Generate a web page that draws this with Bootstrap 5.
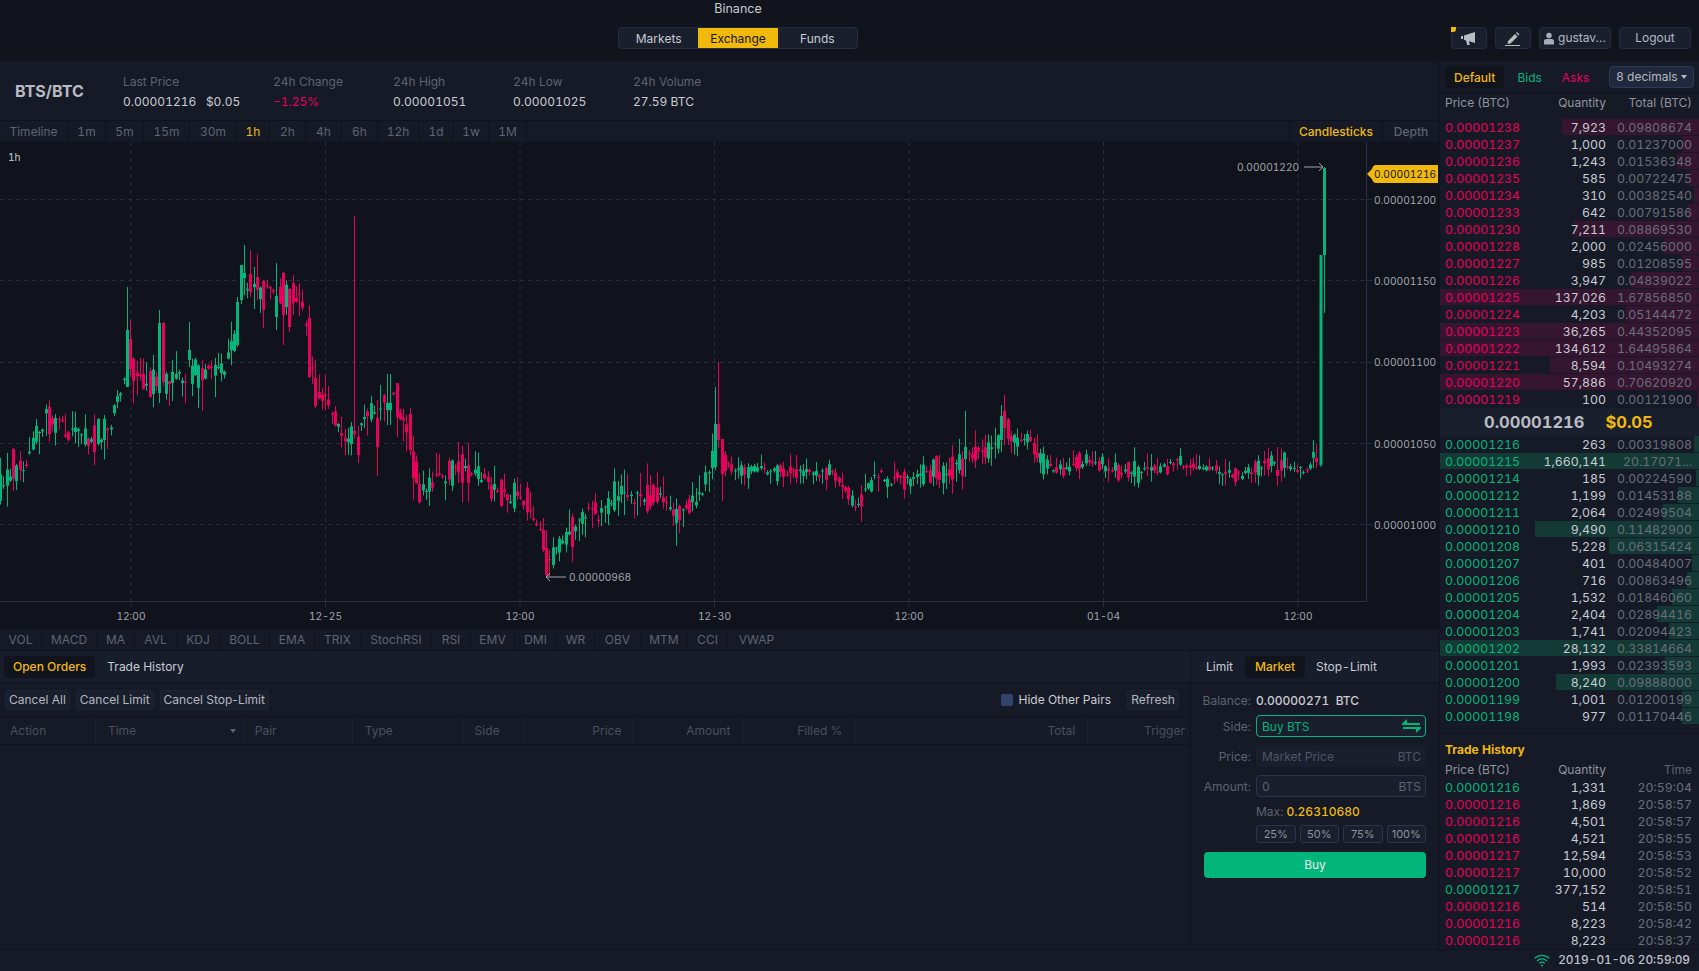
<!DOCTYPE html>
<html lang="en">
<head>
<meta charset="utf-8">
<title>Binance</title>
<link href="https://cdn.jsdelivr.net/npm/bootstrap@5.3.0/dist/css/bootstrap.min.css" rel="stylesheet">
<style>
html,body{height:100%}
body{background:#11141d;color:#c8cbd2;font-family:Inter,"Liberation Sans",sans-serif;font-size:12px;line-height:17px;overflow:hidden;font-variant-numeric:tabular-nums;font-feature-settings:"tnum" 1}
.shell{width:1699px;height:971px}
.top-bar{height:61px;background:#11141d}
.top-left{width:618px}
.top-mid{width:240px}
.top-title{height:18px;line-height:18px;font-size:12.5px;margin-bottom:9px}
.top-right{padding-top:27px;padding-right:8px;gap:8px}
.seg{height:22px;border:1px solid #262c40;border-radius:4px;background:#1a1f2e;overflow:hidden}
.seg a{flex:1;text-align:center;line-height:21px;color:#c8cbd2;text-decoration:none}
.seg a.on{background:#f0b90b;color:#14151a}
.tool-btn{height:22px;width:36px;background:#1a1f2e;border:1px solid #262c40;border-radius:4px;padding:0;color:#b4b7bf;font-size:12px;line-height:20px;position:relative}
.tool-btn.wide{width:72px}
.tool-btn:hover{background:#1a1f2e;color:#b4b7bf;border-color:#262c40}
.corner{position:absolute;left:-1px;top:-1px;width:5px;height:5px;background:#f0b90b;border-bottom-right-radius:3px}
.mainrow{height:888px}
.left-col{width:1439px}
.ticker{height:60px;background:#161a26;border-bottom:1px solid #10131b;padding-left:15px;padding-top:2px}
.pair{width:108px;font-size:16px;font-weight:700;color:#b9bbc2;line-height:20px;margin-top:-2px}
.stat{width:120px}
.stat:nth-child(2){width:150px}
.stat-k{color:#5e6371;line-height:20px;margin-bottom:0}
.stat-v{color:#c8cbd2;line-height:20px}
.strip{height:21px;background:#161a26;color:#5f6472;line-height:21px}
.strip span{padding:0 9px;border-right:1px solid #10131b;text-align:center;white-space:nowrap}
.strip .on{color:#f0b90b}
.tf span{padding:0}
.tf span:nth-child(1){width:68px}.tf span:nth-child(2),.tf span:nth-child(3),.tf span:nth-child(13){width:38px}
.tf span:nth-child(4){width:46px}.tf span:nth-child(5){width:47px}.tf span:nth-child(6){width:33px}
.tf span:nth-child(7),.tf span:nth-child(8),.tf span:nth-child(9){width:36px}.tf span:nth-child(10){width:41px}
.tf span:nth-child(11),.tf span:nth-child(12){width:35px}
.tf .kind{width:94px!important;font-weight:500;border-left:1px solid #10131b}
.tf .kind2{width:56px!important;font-weight:500;border-right:0}
.ind span{padding:0}
.ind span:nth-child(1){width:42px}.ind span:nth-child(2){width:55px}.ind span:nth-child(3){width:38px}.ind span:nth-child(4){width:42px}.ind span:nth-child(5){width:43px}.ind span:nth-child(6){width:50px}.ind span:nth-child(7){width:45px}.ind span:nth-child(8){width:46px}.ind span:nth-child(9){width:71px}.ind span:nth-child(10){width:39px}.ind span:nth-child(11){width:44px}.ind span:nth-child(12){width:42px}.ind span:nth-child(13){width:38px}.ind span:nth-child(14){width:46px}.ind span:nth-child(15){width:47px}.ind span:nth-child(16){width:40px}.ind span:nth-child(17){width:57px;border-right:0}
.chart-wrap{height:487px;background:#10131c}
.chart-wrap svg{display:block}
.lower{height:299px;background:#161a26;border-top:1px solid #10131b}
.orders{width:1191px;border-right:1px solid #10131b}
.tabrow{height:32px;background:#181d2c;border-bottom:1px solid #10131b;padding:5px 4px;gap:12px;align-items:center}
.tabrow a{color:#c8cbd2;text-decoration:none;line-height:22px;padding:0 9px;border-radius:4px}
.tabrow a.on{background:#11141d;color:#f0b90b;font-weight:500}
.tabrow a.bare{padding:0}
.tabrow.tight{gap:0}
.tabrow.tight a:first-child{padding:0 12px 0 11px}
.tabrow.tight a.on{width:60px;padding:0;text-align:center}
.tabrow.tight a:last-child{margin-left:2px}
.act-row{height:34px;padding:0 11px 0 5px;gap:6px;border-bottom:1px solid #10131b}
.act-right{gap:6px}
.mini{height:20px;padding:0 3px;line-height:18px;font-size:12px;background:#1a1f2e;border:1px solid #1f2434;border-radius:3px;color:#b4b7bf}
.mini:hover{background:#1a1f2e;color:#b4b7bf;border-color:#1f2434}
.mini.fixed{width:52px}
.hide-check{width:12px;height:12px;background:#33426b;border-radius:2px}
.hide-txt{margin-right:10px}
.ohead{height:28px;border-bottom:1px solid #10131b;color:#4b505e;line-height:27px}
.ohead>div{padding:0 12px;border-right:1px solid #1c2130;height:27px;position:relative}
.ohead>div:last-child{border-right:0;padding-right:5px}
.caret-s{position:absolute;right:6px;top:12px;width:0;height:0;border:3.5px solid transparent;border-top:4px solid #5e6371;border-bottom:0}
.w1{width:96px;padding-left:10px!important}.w2{width:147px}.w3{width:110px}.w4{width:110px}.w5{width:62px}.w6{width:110px}.w7{width:109px}.w8{width:112px}.w9{width:233px}.w10{width:102px}
.trade{width:248px}
.trade-body{padding:7px 12px 0 13px}
.frow{display:flex;align-items:center;gap:5px}
.frow.tall{height:20px}
.frow.g5{margin-top:5px}.frow.g8{margin-top:8px}.frow.g4{margin-top:4px}
.flab{width:47px;text-align:right;white-space:nowrap;color:#5e6371;flex:none;display:flex;justify-content:flex-end}
.ffield{width:170px;height:22px;background:#1a1f2e;border:1px solid #2c3450;border-radius:4px;padding:0 4px 0 5px;display:flex;justify-content:space-between;align-items:center;color:#5e6371}
.ffield.plain{border-color:#1a1f2e;color:#4f5565}
.ffield.buy{border-color:#02b57a;color:#02b57a}
.dimtxt{color:#5e6371}
.pcts{width:170px;gap:4px}
.pct{flex:1;height:18px;line-height:16px;padding:0;font-size:11px;background:#1a1f2e;border:1px solid #2c3450;border-radius:3px;color:#8f939d}
.pct:hover{background:#1a1f2e;color:#8f939d;border-color:#2c3450}
.buy-btn{height:26px;width:222px;background:#02b57a;border:0;border-radius:4px;color:#e8e9ec;font-size:12px;padding:0;line-height:26px;margin-top:9px}
.buy-btn:hover{background:#02b57a;color:#e8e9ec}
.book{width:260px;background:#161a26;border-left:1px solid #10131b}
.book-tabs{height:32px;border-bottom:1px solid #10131b;padding:5px 5px;align-items:center}
.book-tabs a{text-decoration:none;line-height:23px;height:22px;padding:0 9px;border-radius:4px}
.book-tabs a.on{background:#11141d;color:#f0b90b;font-weight:500}
.book-tabs a.c-dn{margin-left:2px}
.dec{height:22px;width:85px;padding:0;background:#20283e;border:1px solid #2f3a5a;border-radius:4px;color:#b4b7bf;font-size:12px;line-height:20px}
.dec:hover{background:#20283e;color:#b4b7bf;border-color:#2f3a5a}
.dec::after{vertical-align:2px;margin-left:3px;border-top-width:4px;border-right-width:3px;border-left-width:3px}
.ob-h{height:18px;line-height:19px;color:#90949e;display:flex;padding:0 7px 0 5px}
.ob-h.gapb{margin-bottom:8px}
.ob-h.gaps{margin-bottom:1px}
.ob-h span:first-child,.ob-r span:first-of-type{flex:1}
.ob-h span:last-child,.ob-r span:last-child{width:86px;text-align:right}
.ob-h .dim{color:#5e6371}
.ob-r{height:17px;line-height:17px;display:flex;padding:0 7px 0 5px;position:relative;font-size:12.3px}
.ob-r span{position:relative;white-space:nowrap}
.ob-r span:nth-of-type(2){color:#c8cbd2}
.ob-r span:last-child{color:#6a6e7b}
.ob-b{position:absolute;right:0;top:0;height:16px}
.ob-b.s{background:#35152f}
.ob-b.l{background:#133a35}
.c-up{color:#02b57a}.c-dn{color:#e9005c}.c-y{color:#f0b90b}
.mid-px{height:28px;background:#1a1f2e;font-size:16.5px;font-weight:700;line-height:28px;padding-left:44px;gap:21px;color:#b9bbc2}
.hist-t{height:27px;margin-top:8px;border-top:1px solid #10131b;padding:7px 5px 0;color:#f0b90b;font-weight:700}
.foot{height:22px;background:#161a26;border-top:1px solid #10131b;padding-right:9px;gap:8px;font-size:11.8px;font-weight:500;color:#c0c3ca}
</style>
</head>
<body>
<div class="shell d-flex flex-column">
  <header class="top-bar d-flex">
    <div class="top-left"></div>
    <div class="top-mid d-flex flex-column">
      <div class="top-title text-center">Binance</div>
      <nav class="seg d-flex"><a href="#">Markets</a><a href="#" class="on">Exchange</a><a href="#">Funds</a></nav>
    </div>
    <div class="top-right flex-grow-1 d-flex justify-content-end">
      <button class="btn tool-btn"><i class="corner"></i><svg width="18" height="15" viewBox="0 0 18 15"><path fill="#b9bcc3" d="M1 5h2v3H1zM4 4.5 15 1v11L9 10.2 9.8 14H7.2L6 9.4 4 8.8z"/></svg></button>
      <button class="btn tool-btn"><svg width="20" height="16" viewBox="0 0 20 16"><path fill="#b9bcc3" d="M5 10 12 3l2.5 2.5-7 7L4.5 13zM13 2l1-1 2.5 2.5-1 1z"/><rect x="2" y="14" width="15" height="1" fill="#b9bcc3"/></svg></button>
      <button class="btn tool-btn wide d-flex align-items-center justify-content-center gap-1"><svg width="10" height="13" viewBox="0 0 11 13"><circle cx="5.5" cy="3.3" r="3" fill="#a9acb4"/><path fill="#a9acb4" d="M0 13V9.5Q0 7 3 7h5q3 0 3 2.5V13z"/></svg><span>gustav...</span></button>
      <button class="btn tool-btn wide">Logout</button>
    </div>
  </header>
  <div class="mainrow d-flex">
    <div class="left-col d-flex flex-column">
      <section class="ticker d-flex align-items-center">
        <div class="pair">BTS/BTC</div>
        <div class="stat"><div class="stat-k">Last Price</div><div class="stat-v">0.00001216&nbsp;&nbsp;&nbsp;$0.05</div></div>
        <div class="stat"><div class="stat-k">24h Change</div><div class="stat-v c-dn">−1.25%</div></div>
        <div class="stat"><div class="stat-k">24h High</div><div class="stat-v">0.00001051</div></div>
        <div class="stat"><div class="stat-k">24h Low</div><div class="stat-v">0.00001025</div></div>
        <div class="stat"><div class="stat-k">24h Volume</div><div class="stat-v">27.59 BTC</div></div>
      </section>
      <div class="strip tf d-flex">
        <span>Timeline</span><span>1m</span><span>5m</span><span>15m</span><span>30m</span><span class="on">1h</span><span>2h</span><span>4h</span><span>6h</span><span>12h</span><span>1d</span><span>1w</span><span>1M</span>
        <span class="ms-auto on kind">Candlesticks</span><span class="kind2">Depth</span>
      </div>
      <div class="chart-wrap">
        <svg id="chart" width="1439" height="487" viewBox="0 142 1439 487" xmlns="http://www.w3.org/2000/svg" font-family="Inter,'Liberation Sans',sans-serif" font-size="10.2" fill="#a2a5ad"></svg>
      </div>
      <div class="strip ind d-flex">
        <span>VOL</span><span>MACD</span><span>MA</span><span>AVL</span><span>KDJ</span><span>BOLL</span><span>EMA</span><span>TRIX</span><span>StochRSI</span><span>RSI</span><span>EMV</span><span>DMI</span><span>WR</span><span>OBV</span><span>MTM</span><span>CCI</span><span>VWAP</span>
      </div>
      <section class="lower d-flex">
        <div class="orders d-flex flex-column">
          <div class="tabrow d-flex"><a href="#" class="on">Open Orders</a><a href="#" class="bare">Trade History</a></div>
          <div class="act-row d-flex align-items-center">
            <button class="btn mini">Cancel All</button><button class="btn mini">Cancel Limit</button><button class="btn mini">Cancel Stop-Limit</button>
            <div class="ms-auto d-flex align-items-center act-right"><i class="hide-check"></i><span class="hide-txt">Hide Other Pairs</span><button class="btn mini fixed">Refresh</button></div>
          </div>
          <div class="ohead d-flex">
            <div class="w1">Action</div><div class="w2">Time<i class="caret-s"></i></div><div class="w3">Pair</div><div class="w4">Type</div><div class="w5">Side</div><div class="w6 text-end">Price</div><div class="w7 text-end">Amount</div><div class="w8 text-end">Filled %</div><div class="w9 text-end">Total</div><div class="w10 text-end">Trigger</div>
          </div>
        </div>
        <div class="trade d-flex flex-column">
          <div class="tabrow tight d-flex"><a href="#">Limit</a><a href="#" class="on">Market</a><a href="#">Stop-Limit</a></div>
          <div class="trade-body">
            <div class="frow tall"><div class="flab">Balance:</div><div class="fw-medium">0.00000271&nbsp; BTC</div></div>
            <div class="frow g5"><div class="flab">Side:</div><div class="ffield buy"><span>Buy BTS</span><svg width="19" height="14" viewBox="0 0 19 14"><path fill="#02b57a" d="M5 0 0 4.6V6h18V4H5zM1 8v2h13v4l5-4.6V8z"/></svg></div></div>
            <div class="frow g8"><div class="flab">Price:</div><div class="ffield plain"><span>Market Price</span><span>BTC</span></div></div>
            <div class="frow g8"><div class="flab">Amount:</div><div class="ffield"><span>0</span><span>BTS</span></div></div>
            <div class="frow tall g4"><div class="flab"></div><div><span class="dimtxt">Max:</span> <span class="c-y fw-medium">0.26310680</span></div></div>
            <div class="frow g4"><div class="flab"></div><div class="pcts d-flex"><button class="btn pct">25%</button><button class="btn pct">50%</button><button class="btn pct">75%</button><button class="btn pct">100%</button></div></div>
            <button class="btn buy-btn">Buy</button>
          </div>
        </div>
      </section>
    </div>
    <aside class="book d-flex flex-column">
      <div class="book-tabs d-flex"><a href="#" class="on">Default</a><a href="#" class="c-up ms-1">Bids</a><a href="#" class="c-dn">Asks</a><button class="btn dec dropdown-toggle ms-auto">8 decimals</button></div>
      <div class="ob-h gapb"><span>Price (BTC)</span><span>Quantity</span><span>Total (BTC)</span></div>
      <div class="ob-r"><i class="ob-b s" style="width:137px"></i><span class="c-dn">0.00001238</span><span>7,923</span><span>0.09808674</span></div>
      <div class="ob-r"><i class="ob-b s" style="width:17px"></i><span class="c-dn">0.00001237</span><span>1,000</span><span>0.01237000</span></div>
      <div class="ob-r"><i class="ob-b s" style="width:22px"></i><span class="c-dn">0.00001236</span><span>1,243</span><span>0.01536348</span></div>
      <div class="ob-r"><i class="ob-b s" style="width:10px"></i><span class="c-dn">0.00001235</span><span>585</span><span>0.00722475</span></div>
      <div class="ob-r"><i class="ob-b s" style="width:5px"></i><span class="c-dn">0.00001234</span><span>310</span><span>0.00382540</span></div>
      <div class="ob-r"><i class="ob-b s" style="width:11px"></i><span class="c-dn">0.00001233</span><span>642</span><span>0.00791586</span></div>
      <div class="ob-r"><i class="ob-b s" style="width:125px"></i><span class="c-dn">0.00001230</span><span>7,211</span><span>0.08869530</span></div>
      <div class="ob-r"><i class="ob-b s" style="width:35px"></i><span class="c-dn">0.00001228</span><span>2,000</span><span>0.02456000</span></div>
      <div class="ob-r"><i class="ob-b s" style="width:17px"></i><span class="c-dn">0.00001227</span><span>985</span><span>0.01208595</span></div>
      <div class="ob-r"><i class="ob-b s" style="width:68px"></i><span class="c-dn">0.00001226</span><span>3,947</span><span>0.04839022</span></div>
      <div class="ob-r"><i class="ob-b s" style="width:259px"></i><span class="c-dn">0.00001225</span><span>137,026</span><span>1.67856850</span></div>
      <div class="ob-r"><i class="ob-b s" style="width:73px"></i><span class="c-dn">0.00001224</span><span>4,203</span><span>0.05144472</span></div>
      <div class="ob-r"><i class="ob-b s" style="width:259px"></i><span class="c-dn">0.00001223</span><span>36,265</span><span>0.44352095</span></div>
      <div class="ob-r"><i class="ob-b s" style="width:259px"></i><span class="c-dn">0.00001222</span><span>134,612</span><span>1.64495864</span></div>
      <div class="ob-r"><i class="ob-b s" style="width:149px"></i><span class="c-dn">0.00001221</span><span>8,594</span><span>0.10493274</span></div>
      <div class="ob-r"><i class="ob-b s" style="width:259px"></i><span class="c-dn">0.00001220</span><span>57,886</span><span>0.70620920</span></div>
      <div class="ob-r"><i class="ob-b s" style="width:2px"></i><span class="c-dn">0.00001219</span><span>100</span><span>0.00121900</span></div>
      <div class="mid-px d-flex"><span>0.00001216</span><span class="c-y">$0.05</span></div>
      <div class="ob-r"><i class="ob-b l" style="width:5px"></i><span class="c-up">0.00001216</span><span>263</span><span>0.00319808</span></div>
      <div class="ob-r"><i class="ob-b l" style="width:259px"></i><span class="c-up">0.00001215</span><span>1,660,141</span><span>20.17071...</span></div>
      <div class="ob-r"><i class="ob-b l" style="width:3px"></i><span class="c-up">0.00001214</span><span>185</span><span>0.00224590</span></div>
      <div class="ob-r"><i class="ob-b l" style="width:21px"></i><span class="c-up">0.00001212</span><span>1,199</span><span>0.01453188</span></div>
      <div class="ob-r"><i class="ob-b l" style="width:36px"></i><span class="c-up">0.00001211</span><span>2,064</span><span>0.02499504</span></div>
      <div class="ob-r"><i class="ob-b l" style="width:164px"></i><span class="c-up">0.00001210</span><span>9,490</span><span>0.11482900</span></div>
      <div class="ob-r"><i class="ob-b l" style="width:90px"></i><span class="c-up">0.00001208</span><span>5,228</span><span>0.06315424</span></div>
      <div class="ob-r"><i class="ob-b l" style="width:7px"></i><span class="c-up">0.00001207</span><span>401</span><span>0.00484007</span></div>
      <div class="ob-r"><i class="ob-b l" style="width:12px"></i><span class="c-up">0.00001206</span><span>716</span><span>0.00863496</span></div>
      <div class="ob-r"><i class="ob-b l" style="width:27px"></i><span class="c-up">0.00001205</span><span>1,532</span><span>0.01846060</span></div>
      <div class="ob-r"><i class="ob-b l" style="width:42px"></i><span class="c-up">0.00001204</span><span>2,404</span><span>0.02894416</span></div>
      <div class="ob-r"><i class="ob-b l" style="width:30px"></i><span class="c-up">0.00001203</span><span>1,741</span><span>0.02094423</span></div>
      <div class="ob-r"><i class="ob-b l" style="width:259px"></i><span class="c-up">0.00001202</span><span>28,132</span><span>0.33814664</span></div>
      <div class="ob-r"><i class="ob-b l" style="width:34px"></i><span class="c-up">0.00001201</span><span>1,993</span><span>0.02393593</span></div>
      <div class="ob-r"><i class="ob-b l" style="width:143px"></i><span class="c-up">0.00001200</span><span>8,240</span><span>0.09888000</span></div>
      <div class="ob-r"><i class="ob-b l" style="width:17px"></i><span class="c-up">0.00001199</span><span>1,001</span><span>0.01200199</span></div>
      <div class="ob-r"><i class="ob-b l" style="width:17px"></i><span class="c-up">0.00001198</span><span>977</span><span>0.01170446</span></div>
      <div class="hist-t">Trade History</div>
      <div class="ob-h gaps"><span>Price (BTC)</span><span>Quantity</span><span class="dim">Time</span></div>
      <div class="ob-r c-up"><span>0.00001216</span><span>1,331</span><span>20:59:04</span></div>
      <div class="ob-r c-dn"><span>0.00001216</span><span>1,869</span><span>20:58:57</span></div>
      <div class="ob-r c-dn"><span>0.00001216</span><span>4,501</span><span>20:58:57</span></div>
      <div class="ob-r c-dn"><span>0.00001216</span><span>4,521</span><span>20:58:55</span></div>
      <div class="ob-r c-dn"><span>0.00001217</span><span>12,594</span><span>20:58:53</span></div>
      <div class="ob-r c-dn"><span>0.00001217</span><span>10,000</span><span>20:58:52</span></div>
      <div class="ob-r c-up"><span>0.00001217</span><span>377,152</span><span>20:58:51</span></div>
      <div class="ob-r c-dn"><span>0.00001216</span><span>514</span><span>20:58:50</span></div>
      <div class="ob-r c-dn"><span>0.00001216</span><span>8,223</span><span>20:58:42</span></div>
      <div class="ob-r c-dn"><span>0.00001216</span><span>8,223</span><span>20:58:37</span></div>
    </aside>
  </div>
  <footer class="foot d-flex justify-content-end align-items-center">
    <svg width="16" height="13" viewBox="0 0 16 13" fill="none" stroke="#02b57a" stroke-width="1.2"><path d="M.6 4.4a10.5 10.5 0 0 1 14.8 0M3 7a7 7 0 0 1 10 0M5.3 9.4a3.6 3.6 0 0 1 5.4 0"/><circle cx="8" cy="11.6" r="1" fill="#02b57a" stroke="none"/></svg>
    <span>2019-01-06 20:59:09</span>
  </footer>
</div>
<script src="https://cdn.jsdelivr.net/npm/bootstrap@5.3.0/dist/js/bootstrap.bundle.min.js"></script>
<script>
(function(){
var UP='#02b57a',DN='#e9005c',GRID='#272c3e',AX='#2a3148';
var A=[[0,493],[13,470],[25,467],[33,447],[45,418],[51,416],[65,430],[80,436],[100,437],[113,420],[125,372],[140,378],[160,383],[180,378],[200,370],[225,372],[238,325],[250,288],[265,290],[280,295],[300,297],[308,325],[315,385],[325,400],[345,435],[355,432],[375,412],[385,402],[395,398],[405,420],[420,495],[430,480],[445,480],[462,465],[470,470],[490,485],[500,490],[510,500],[520,493],[530,510],[540,522],[546,560],[552,565],[560,545],[570,528],[580,525],[590,510],[600,515],[605,505],[620,493],[640,500],[660,493],[675,510],[690,507],[700,493],[710,477],[716,440],[725,465],[745,470],[770,470],[800,473],[835,473],[845,490],[855,505],[860,505],[870,485],[880,475],[890,480],[905,480],[925,472],[945,470],[960,465],[970,455],[985,450],[995,445],[1003,428],[1010,435],[1020,442],[1030,442],[1042,460],[1050,465],[1060,470],[1075,465],[1095,460],[1115,470],[1135,472],[1160,470],[1180,462],[1195,470],[1215,470],[1240,475],[1255,470],[1265,465],[1285,462],[1300,470],[1305,475],[1315,455],[1320,463]];
function mid(x){for(var i=1;i<A.length;i++){if(x<=A[i][0]){var a=A[i-1],b=A[i];return a[1]+(b[1]-a[1])*(x-a[0])/(b[0]-a[0]);}}return 463;}
var s=20190106;function R(){s|=0;s=s+0x6D2B79F5|0;var t=Math.imul(s^s>>>15,1|s);t=t+Math.imul(t^t>>>7,61|t)^t;return((t^t>>>14)>>>0)/4294967296;}
var O=[[127,330,387,287,387,1],[130,339,369,320,377,0],[159,323,393,310,403,1],[162,323,382,322,386,0],[188,350,360,322,367,1],[201,368,380,360,411,0],[238,302,345,297,347,1],[241,265,300,265,304,1],[245,273,278,245,295,1],[250,274,292,250,297,0],[264,281,310,280,328,0],[277,296,317,263,330,1],[283,273,315,272,345,0],[289,289,327,288,332,0],[309,318,377,305,378,0],[315,378,406,360,408,0],[354,431,434,216,438,0],[357,437,455,426,463,0],[378,418,447,400,476,0],[396,383,417,383,437,0],[389,403,410,374,425,1],[410,414,450,408,455,0],[543,530,550,518,552,0],[546,548,575,530,577,0],[715,424,467,387,470,1],[718,424,440,362,448,0],[721,439,474,440,501,0],[1002,416,440,405,452,1],[1006,411,428,395,445,0],[1009,419,439,418,445,0],[967,447,459,411,477,1],[941,472,480,455,488,0],[1279,470,476,447,486,0],[1317,458,462,444,468,0]];
var h='';
function ln(x1,y1,x2,y2,c,d){return '<line x1="'+x1+'" y1="'+y1+'" x2="'+x2+'" y2="'+y2+'" stroke="'+c+'"'+(d?' stroke-dasharray="4 4"':'')+'/>';}
[131,325.5,520,714.5,909,1103.5,1298].forEach(function(x){h+=ln(x,142,x,601,GRID,1)+ln(x,601,x,607,GRID,0);});
[199.5,280.5,362.5,443.5,524.5].forEach(function(y){h+=ln(0,y,1366,y,GRID,1)+ln(1366,y,1372,y,GRID,0);});
h+=ln(1366.5,142,1366.5,601.5,AX)+ln(0,601.5,1366.5,601.5,AX);
function cd(x,t,b,wt,wb,up){var c=up?UP:DN;return '<rect x="'+(x-.5).toFixed(1)+'" y="'+wt+'" width="1" height="'+(wb-wt)+'" fill="'+c+'"/><rect x="'+(x-1.5).toFixed(1)+'" y="'+t+'" width="3" height="'+Math.max(1,b-t)+'" fill="'+c+'"/>';}
var body=[],N=Math.floor(1318/3.25);
for(var i=0;i<=N;i++){
  var x=Math.round(i*3.25)+.5,v=(x<720)?1.2:(x>860&&x<1060)?.95:.65,m=mid(x)+(R()-.5)*11*v,r=R(),bh=1+r*r*r*24*v,up=R()>.5+(mid(x+4)-mid(x-4))*.03;
  var t=+(m-bh/2).toFixed(1),b=+(m+bh/2).toFixed(1);
  var w1=R(),w2=R(),wt=+(t-w1*w1*20*v-1).toFixed(1),wb=+(b+w2*w2*18*v+1).toFixed(1);
  for(var j=0;j<O.length;j++){if(Math.abs(O[j][0]-x)<1.7){var o=O[j];t=o[1];b=o[2];wt=o[3];wb=o[4];up=o[5];break;}}
  body.push(cd(x,t,b,wt,wb,up));
}
h+=body.join('');
h+=cd(1321,255,465,255,467,1);
h+=cd(1324.5,168,255,167,313,1);
function tx(x,y,t,a,f){return '<text x="'+x+'" y="'+y+'"'+(a?' text-anchor="'+a+'"':'')+(f?' fill="'+f+'"':'')+'>'+t+'</text>';}
[[131,'12:00'],[325.5,'12-25'],[520,'12:00'],[714.5,'12-30'],[909,'12:00'],[1103.5,'01-04'],[1298,'12:00']].forEach(function(p){h+=tx(p[0],620,p[1],'middle');});
[[204,'0.00001200'],[285,'0.00001150'],[366,'0.00001100'],[448,'0.00001050'],[529,'0.00001000']].forEach(function(p){h+=tx(1374,p[0],p[1]);});
h+=tx(8,161,'1h',null,'#c8cbd2');
h+=tx(1237,171,'0.00001220')+'<path d="M1304 167h19m-4-4 4 4-4 4" fill="none" stroke="#a2a5ad"/>';
h+=tx(569,581,'0.00000968')+'<path d="M566 577h-20m4-4-4 4 4 4" fill="none" stroke="#a2a5ad"/>';
h+='<path d="M1367 174l5-5q1-4 4-4h62v18h-62q-3 0-4-4z" fill="#f0b90b"/>'+tx(1374,178,'0.00001216',null,'#14151a');
document.getElementById('chart').innerHTML=h;
})();
</script>
</body>
</html>
